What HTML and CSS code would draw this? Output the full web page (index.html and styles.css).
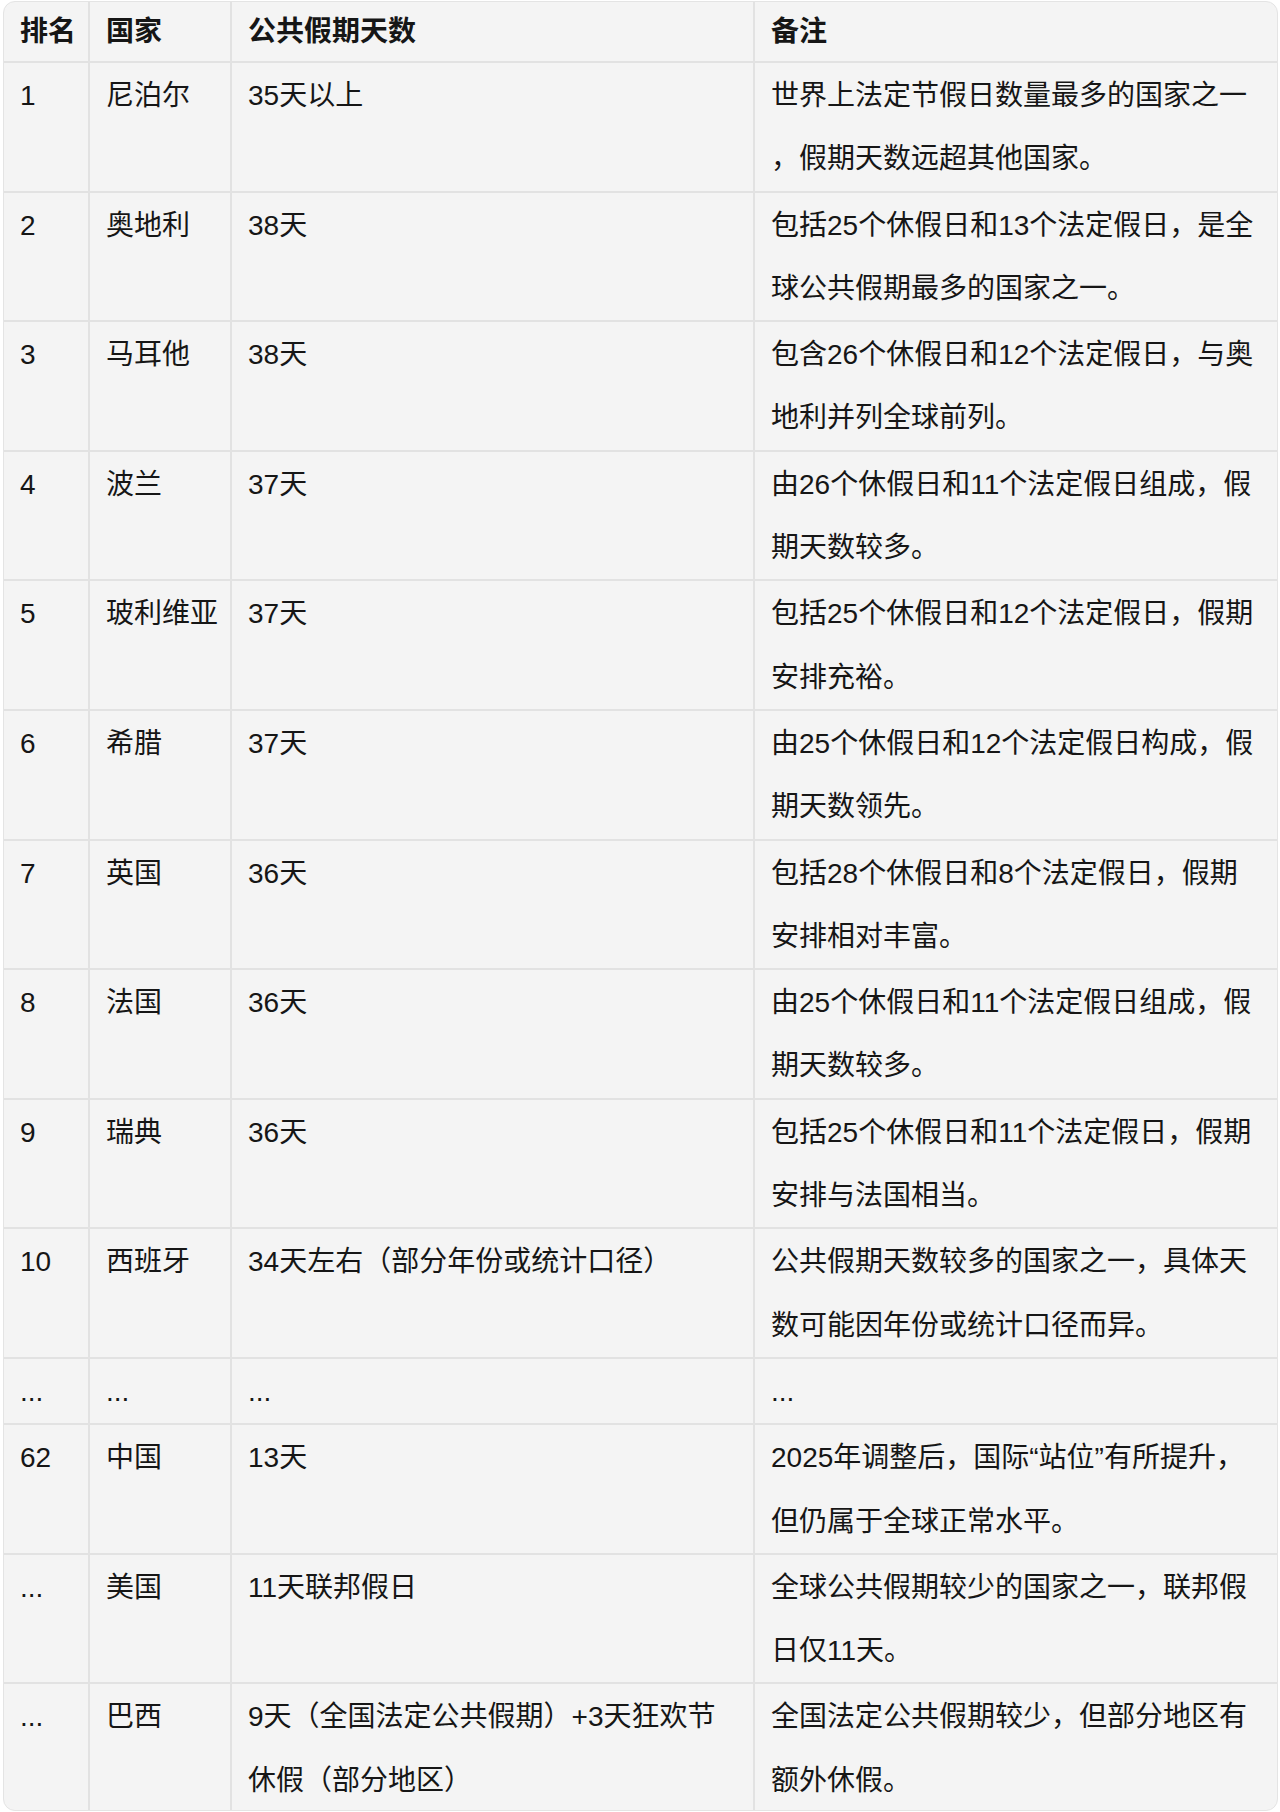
FILE: index.html
```html
<!DOCTYPE html>
<html lang="zh-CN">
<head>
<meta charset="utf-8">
<title>公共假期排名</title>
<link rel="stylesheet" href="styles.css">
</head>
<body>
<div class="wrap">
<table class="tbl">
<thead>
<tr><th class="c1">排名</th><th class="c2">国家</th><th class="c3">公共假期天数</th><th class="c4">备注</th></tr>
</thead>
<tbody>
<tr><td>1</td><td>尼泊尔</td><td>35天以上</td><td>世界上法定节假日数量最多的国家之一<br>，假期天数远超其他国家。</td></tr>
<tr><td>2</td><td>奥地利</td><td>38天</td><td>包括25个休假日和13个法定假日，是全<br>球公共假期最多的国家之一。</td></tr>
<tr><td>3</td><td>马耳他</td><td>38天</td><td>包含26个休假日和12个法定假日，与奥<br>地利并列全球前列。</td></tr>
<tr><td>4</td><td>波兰</td><td>37天</td><td>由26个休假日和11个法定假日组成，假<br>期天数较多。</td></tr>
<tr><td>5</td><td>玻利维亚</td><td>37天</td><td>包括25个休假日和12个法定假日，假期<br>安排充裕。</td></tr>
<tr><td>6</td><td>希腊</td><td>37天</td><td>由25个休假日和12个法定假日构成，假<br>期天数领先。</td></tr>
<tr><td>7</td><td>英国</td><td>36天</td><td>包括28个休假日和8个法定假日，假期<br>安排相对丰富。</td></tr>
<tr><td>8</td><td>法国</td><td>36天</td><td>由25个休假日和11个法定假日组成，假<br>期天数较多。</td></tr>
<tr><td>9</td><td>瑞典</td><td>36天</td><td>包括25个休假日和11个法定假日，假期<br>安排与法国相当。</td></tr>
<tr><td>10</td><td>西班牙</td><td>34天左右（部分年份或统计口径）</td><td>公共假期天数较多的国家之一，具体天<br>数可能因年份或统计口径而异。</td></tr>
<tr class="short"><td>...</td><td>...</td><td>...</td><td>...</td></tr>
<tr><td>62</td><td>中国</td><td>13天</td><td>2025年调整后，国际“站位”有所提升，<br>但仍属于全球正常水平。</td></tr>
<tr><td>...</td><td>美国</td><td>11天联邦假日</td><td>全球公共假期较少的国家之一，联邦假<br>日仅11天。</td></tr>
<tr class="last"><td>...</td><td>巴西</td><td>9天（全国法定公共假期）+3天狂欢节<br>休假（部分地区）</td><td>全国法定公共假期较少，但部分地区有<br>额外休假。</td></tr>
</tbody>
</table>
</div>
</body>
</html>
```

FILE: styles.css
```css
html, body {
  margin: 0;
  padding: 0;
  background: #ffffff;
}

body {
  font-family: "Liberation Sans", "Noto Sans CJK SC", sans-serif;
  color: #161616;
}

.wrap {
  margin: 1px 2px 0 3px;
  background: #f4f4f4;
  border: 1px solid #e4e4e4;
  border-radius: 12px;
  overflow: hidden;
  height: 1810px;
  box-sizing: border-box;
}

.tbl {
  width: 100%;
  border-collapse: separate;
  border-spacing: 0;
  table-layout: fixed;
  font-size: 28px;
}

.tbl th,
.tbl td {
  box-sizing: border-box;
  text-align: left;
  vertical-align: top;
  padding: 0 16px;
  border-right: 2px solid #e2e2e2;
  border-bottom: 2px solid #e2e2e2;
  white-space: nowrap;
}

.tbl th:last-child,
.tbl td:last-child {
  border-right: none;
  padding-left: 16px;
}

.tbl th {
  font-weight: bold;
  line-height: 59px;
  height: 61px;
}

.tbl td {
  padding-top: 1px;
  line-height: 63.3px;
}

.c1 { width: 86px; }
.c2 { width: 142px; }
.c3 { width: 523px; }
.c4 { width: auto; }

.tbl tr.last td {
  border-bottom: none;
}
```
